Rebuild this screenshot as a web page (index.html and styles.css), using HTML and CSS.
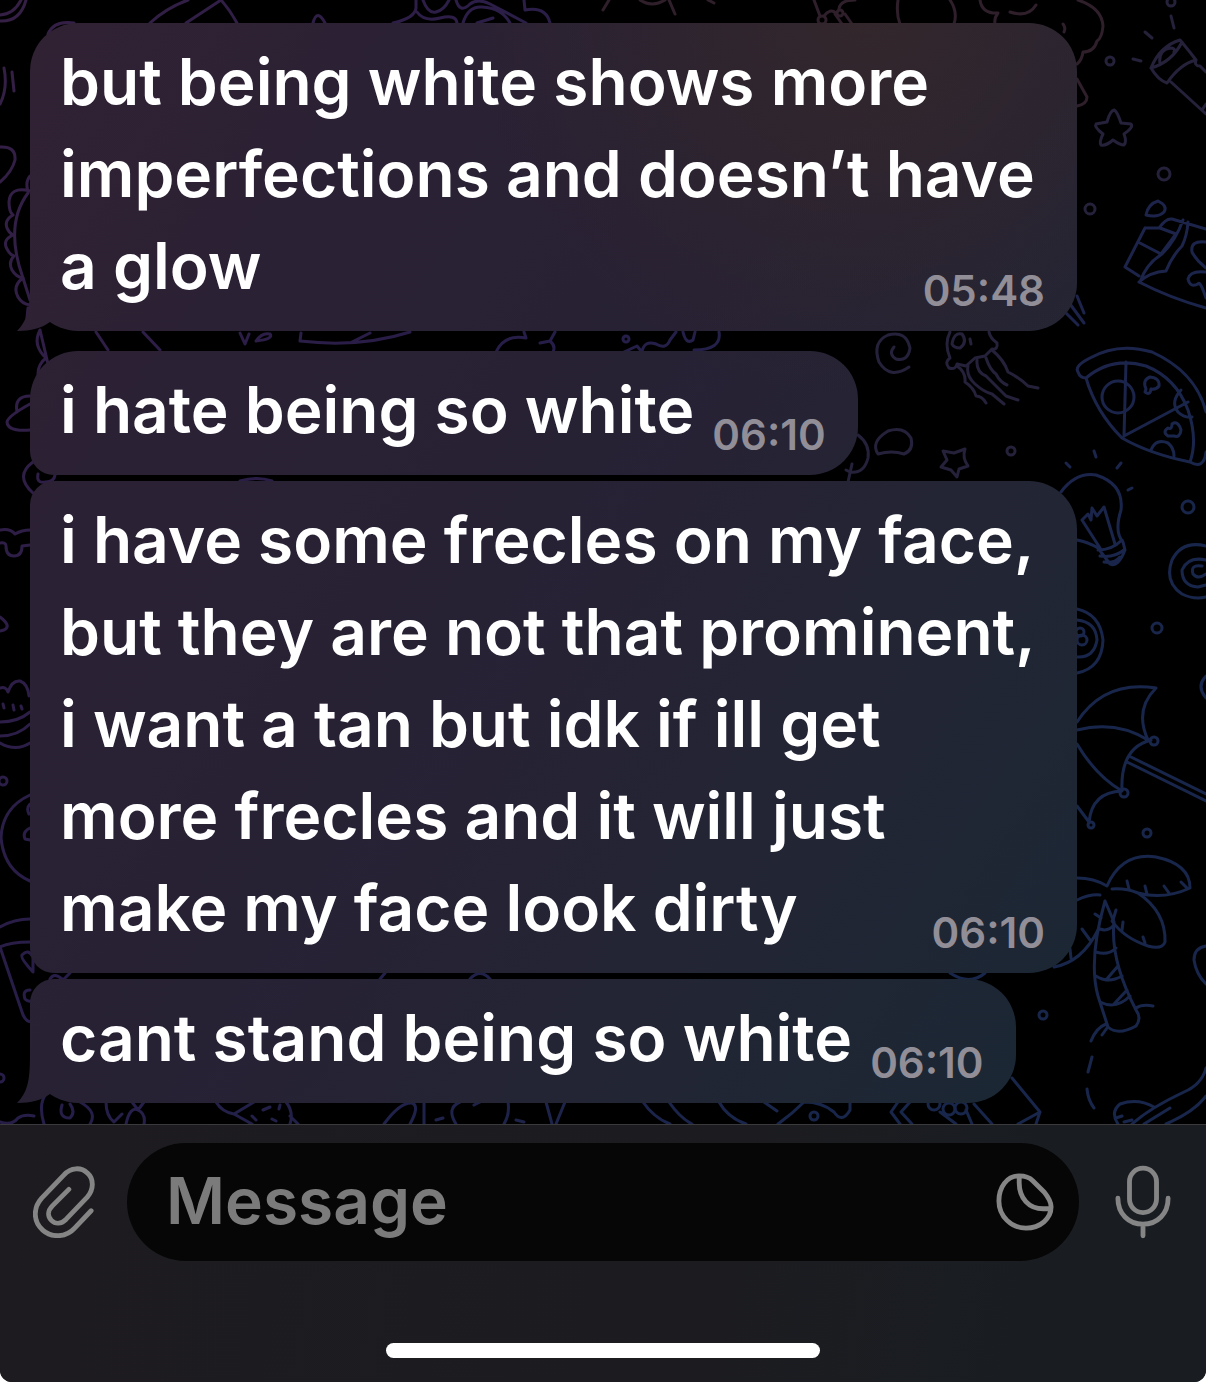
FILE: index.html
```html
<!DOCTYPE html>
<html lang="en">
<head>
  <meta charset="UTF-8" />
  <meta name="viewport" content="width=device-width, initial-scale=1" />
  <title>Chat</title>
  <link rel="stylesheet" href="styles.css">
</head>
<body>

  <div class="app">

    <main class="chat">
      <!-- doodle wallpaper -->
      <svg class="wallpaper" viewBox="0 0 1206 1124" preserveAspectRatio="xMidYMin slice" aria-hidden="true">
        <defs>
          <linearGradient id="ink" gradientUnits="userSpaceOnUse" x1="0" y1="0" x2="1100" y2="700">
            <stop offset="0" stop-color="#351f45" />
            <stop offset="0.45" stop-color="#271d48" />
            <stop offset="1" stop-color="#18264b" />
          </linearGradient>
        </defs>

        <!-- top edge -->
        <g class="warm">
          <path d="M898 0 Q896 14 900 24 M950 0 Q958 12 954 24" />
          <path d="M980 0 Q982 14 998 13 Q994 18 995 24 M1010 12 Q1028 18 1036 5" />
          <path d="M1078 0 Q1102 8 1103 26 Q1102 38 1097 41 Q1094 52 1083 52 Q1082 60 1077 64" />
          <path d="M1063 24 Q1066 28 1064 32" />
          <path d="M1077 79 L1087 97 Q1087 104 1077 106" />
          <path d="M603 10 L609 0 M640 0 Q652 8 665 0 M669 0 L675 14 M708 0 L714 3 M814 0 L820 16 M824 16 Q830 8 836 13 M839 9 Q840 0 855 0 M835 14 L842 24 M845 14 L852 24" />
          <circle cx="822" cy="20" r="4" />
          <circle cx="840" cy="13" r="3" />
        </g>
        <path d="M0 15 Q14 14 21 0 M0 21 Q20 22 26 0" />
        <path d="M48 34 Q54 20 74 23 M150 23 Q166 8 188 0 M186 23 L221 0 M221 0 Q230 10 237 23" />
        <path d="M313 23 Q317 8 325 23 M393 23 Q415 18 416 8 L416 0 M417 12 Q424 22 440 18 Q456 14 457 23 M423 0 Q428 14 436 12 Q444 10 449 0 M456 0 Q460 14 470 4 Q478 -2 490 4 L526 23 M463 23 Q468 6 482 7 Q502 8 510 23 M524 0 L525 10 Q546 6 550 23 M477 23 L493 18" />

        <!-- left edge -->
        <path d="M4 68 Q8 88 0 104 M12 72 L14 91" />
        <path d="M0 147 Q16 146 15 160 Q12 172 0 182" />
        <path d="M30 176 Q25 182 28 191 M30 191 Q10 186 9 202 Q9 212 13 215 Q4 220 7 228 Q9 233 13 235 Q2 240 7 249 Q10 255 14 256 Q8 262 12 270 Q16 277 23 278 Q12 286 18 297 Q22 304 30 305" />
        <path d="M28 193 Q4 225 23 278 L30 300" />
        <path d="M28 308 L27 318 M40 330 Q32 345 46 358 Q38 364 38 374 M40 330 L48 364" />
        <path d="M17 412 Q14 396 30 396 M30 404 Q8 416 7 422 Q8 432 30 430" />
        <path d="M33 462 Q14 476 33 493 M38 474 Q36 484 46 482 Q54 482 55 475" />
        <path d="M0 530 Q10 528 15 534 Q22 530 30 530 M0 543 Q6 542 6 546 Q6 556 14 556 Q22 556 22 546 L30 545" />
        <path d="M0 617 Q12 626 4 630 L0 631" />
        <path d="M0 688 Q6 686 8 692 Q12 680 20 681 Q28 684 29 696 M3 704 L4 708 M13 705 L14 710 M21 706 L22 709 M0 722 Q18 722 30 712 M0 736 Q18 736 30 724 M0 743 Q16 752 30 743" />
        <circle cx="3" cy="781" r="4" />
        <path d="M30 795 Q2 808 1 838 Q4 870 30 881 M30 804 Q26 808 29 814 M30 828 Q22 832 25 839 L30 840" />
        <path d="M0 927 Q14 919 30 919 M0 947 Q10 942 30 942 M0 947 L22 1012 Q25 1022 32 1022 M33 972 Q20 958 22 955 Q28 948 33 957 Z M30 990 Q22 990 25 999 Q28 1002 31 1001" />
        <circle cx="0" cy="1078" r="4" />

        <!-- strips between bubbles -->
        <path d="M96 332 L108 350 M143 332 L160 350 M240 333 L245 344 L249 334 M256 341 Q262 332 270 334 Q274 339 256 341 M301 333 L300 341 Q360 348 410 332 M352 342 L370 333" />
        <path d="M496 352 Q504 334 526 338 L524 332 M540 343 L550 341 Q556 346 553 352 M550 341 L555 332 M624 352 L637 346 L642 352 Q644 340 656 344 Q666 350 670 340 L676 332 M683 332 Q686 345 693 340 L695 332 M719 332 Q722 350 694 350" />
        <circle cx="626" cy="339" r="3" />
        <path d="M240 481 Q257 476 272 481 M50 979 Q54 972 62 979 M64 979 L70 973 M380 979 L385 973 M470 979 Q480 968 490 979 M950 973 Q970 986 985 973" />

        <!-- flashlight -->
        <path class="dusk" d="M1151 68 Q1160 46 1180 40 Q1190 52 1196 60 Q1180 64 1167 83 Q1158 80 1151 68 M1151 68 Q1172 62 1182 42 M1160 64 Q1158 50 1170 48 Q1176 48 1174 52 M1171 82 L1206 114 M1196 60 Q1194 66 1200 66 L1206 72 M1202 110 L1206 104" />
        <path class="dusk" d="M1145 32 L1152 38 M1133 59 L1141 61 M1171 16 L1174 28" />
        <g class="dusk">
          <circle cx="1171" cy="2" r="4" />
          <circle cx="1110" cy="61" r="4" />
          <circle cx="1164" cy="174" r="6" />
          <circle cx="1090" cy="209" r="5" />
          <path d="M1114 110 Q1117 111 1121 123 L1131 124 Q1134 127 1124 134 Q1127 142 1124 145 Q1120 145 1113 140 Q1106 146 1101 145 Q1099 142 1103 134 Q1094 127 1096 124 L1107 122 Q1110 111 1114 110 Z" />
        </g>

        <!-- chocolate bar -->
        <path d="M1145 228 L1159 228 Q1166 218 1172 219 L1206 229 M1145 228 L1125 267 L1139 276 M1140 282 Q1146 264 1162 254 Q1176 240 1183 220 M1139 282 Q1150 272 1166 271 Q1172 256 1182 246 Q1187 236 1188 222 M1138 242 L1161 254 L1176 234 L1160 228 M1139 282 Q1170 298 1206 308" />
        <path d="M1206 242 Q1190 240 1192 252 Q1196 260 1206 268 M1206 272 Q1190 270 1188 279 Q1190 288 1198 284 Q1200 280 1206 298" />
        <path d="M1146 215 Q1148 204 1158 201 Q1168 206 1164 212 Q1158 218 1146 215 Z" />
        <path d="M1077 296 L1084 313 M1070 304 L1084 323 M1064 311 L1078 325" />

        <!-- jellyfish and small bits -->
        <g class="dusk">
          <path d="M909 367 Q890 380 879 362 Q872 342 888 335 Q906 330 910 348 Q908 362 896 359 Q888 354 894 347" />
          <path d="M950 332 Q944 344 950 358 Q944 362 949 368 Q956 370 957 364 L966 366 L975 358 L985 356 L992 349 Q998 350 997 343 Q990 338 989 332 M952 344 Q954 332 962 334 Q968 342 960 348 Q954 348 952 344 M970 339 L971 344" />
          <path d="M957 366 Q966 372 965 382 Q974 388 976 396 Q982 396 986 403 M968 366 Q966 376 975 384 Q984 392 992 394 L1004 404 M977 360 Q976 372 986 376 Q998 388 1006 396 L1018 400 M986 358 Q990 370 996 374 Q1000 382 1007 385 M992 350 Q1004 360 1008 372 Q1020 378 1028 386 L1038 388" />
          <path d="M878 454 Q870 442 888 431 Q904 426 911 438 Q914 450 904 454 Q892 450 878 454 Z" />
          <path d="M858 435 Q870 444 868 458 Q864 474 850 472 L846 470 M852 464 L848 482" />
          <path d="M954 453 L965 449 Q962 458 968 466 L959 469 L957 477 L951 470 L941 467 L947 460 L943 451 Z" />
          <circle cx="1011" cy="451" r="4" />
        </g>

        <!-- pizza -->
        <path d="M1078 372 Q1074 366 1090 358 Q1118 342 1152 352 Q1196 372 1206 412 M1078 372 Q1080 378 1086 378 Q1112 356 1146 366 Q1176 378 1188 410 Q1198 440 1190 462 M1086 378 Q1096 412 1122 438 Q1150 454 1190 462 Q1204 470 1206 452 M1126 362 L1124 436 L1188 402" />
        <circle cx="1118" cy="397" r="16" />
        <path d="M1181 390 Q1170 402 1178 412 Q1184 418 1192 417 M1151 450 Q1156 438 1168 443 Q1174 448 1174 456" />
        <path d="M1146 389 Q1142 380 1150 377 Q1160 378 1159 386 Q1156 390 1151 389 Q1150 396 1145 392 Z M1172 424 Q1178 420 1181 430 Q1180 438 1174 436 L1168 436 Q1162 432 1168 428 Q1172 430 1172 424 Z" />

        <!-- light bulb -->
        <path d="M1061 492 Q1076 472 1096 475 Q1124 484 1121 510 Q1114 532 1123 542 L1125 550 Q1118 568 1110 564 L1098 548 Q1088 542 1077 540 M1098 550 Q1112 550 1122 540 M1100 556 Q1114 558 1124 550 M1104 562 Q1114 564 1120 557 M1100 548 L1082 520 L1088 514 L1091 520 L1092 508 L1097 516 L1104 507 L1115 544" />
        <path d="M1066 463 L1070 467 M1094 451 L1096 457 M1121 463 L1117 468 M1132 488 L1128 490" />
        <circle cx="1188" cy="507" r="6" />

        <!-- snail shell, coin -->
        <path d="M1206 546 Q1182 540 1172 560 Q1164 582 1182 594 Q1194 600 1206 597 M1206 560 Q1188 556 1182 570 Q1182 586 1198 587 L1206 585 M1202 566 Q1190 564 1193 574 Q1198 580 1206 574" />
        <path d="M1077 609 Q1100 614 1103 640 Q1102 668 1077 673 M1077 620 Q1096 622 1097 640 Q1094 658 1077 657" />
        <circle cx="1080" cy="632" r="4" />
        <circle cx="1082" cy="640" r="5" />
        <circle cx="1157" cy="628" r="5" />
        <path d="M1206 676 Q1196 686 1206 698" />

        <!-- umbrella -->
        <path d="M1077 722 Q1104 680 1156 688 Q1134 710 1148 740 Q1116 720 1077 730 M1077 744 Q1096 776 1122 791 Q1120 748 1151 740 M1077 806 L1089 822 Q1092 792 1122 791 M1131 757 L1206 794 M1127 762 L1206 801" />
        <circle cx="1154" cy="741" r="4" />
        <circle cx="1124" cy="793" r="4" />
        <circle cx="1091" cy="825" r="3" />
        <circle cx="1147" cy="833" r="4" />

        <!-- palm tree -->
        <path d="M1077 878 Q1094 878 1107 886 Q1122 852 1156 857 Q1190 864 1190 888 Q1164 900 1138 893 Q1126 888 1112 889 M1138 893 Q1166 912 1165 942 Q1162 950 1148 946 Q1124 938 1112 921 M1077 900 Q1090 894 1100 895 M1054 967 Q1082 962 1098 930" />
        <path d="M1127 881 L1129 889 M1145 886 L1147 894 M1164 886 L1169 893 M1181 882 L1187 888 M1095 914 L1101 918 M1082 929 L1090 940 M1070 949 L1071 958 M1116 910 L1113 920 M1123 922 L1122 930 M1143 937 L1145 943" />
        <path d="M1105 901 Q1088 960 1098 996 L1108 1027 Q1118 1036 1136 1026 Q1142 1018 1136 1010 Q1110 960 1114 922 L1105 901 M1100 929 Q1108 932 1114 925 M1096 952 Q1108 956 1116 948 M1096 976 Q1108 984 1122 976 M1100 1002 Q1116 1010 1130 996 M1106 980 L1118 966 M1114 1004 L1127 990" />
        <path d="M1136 1008 Q1142 1004 1153 1006 M1106 1024 Q1096 1028 1091 1041 M1107 1028 L1102 1035 M1092 1057 L1088 1072 M1087 1089 Q1088 1100 1094 1108" />
        <circle cx="1043" cy="1015" r="4" />
        <path d="M1206 946 Q1194 948 1194 960 Q1196 974 1206 984" />

        <!-- bottom strip -->
        <path d="M0 1122 Q12 1126 18 1118 Q24 1114 34 1116 M44 1124 Q38 1104 46 1094 M80 1102 Q98 1112 90 1124 M62 1105 Q58 1118 70 1118 Q76 1112 70 1104 M106 1102 Q106 1116 114 1122 L122 1114 M126 1124 Q130 1106 138 1110 Q146 1114 144 1124 M132 1102 L138 1110 L144 1102" />
        <path d="M216 1102 Q222 1112 234 1114 L254 1102 M234 1114 L252 1124 M286 1102 Q294 1112 290 1124 M290 1116 L298 1124 M270 1107 L263 1110 M280 1105 L279 1109 M252 1116 L256 1120 M272 1119 L276 1121" />
        <path d="M384 1124 Q400 1102 412 1103 Q420 1106 410 1124 M424 1102 L424 1124 M456 1124 Q446 1108 460 1102 M474 1105 L480 1102 M508 1102 Q510 1114 504 1124 M436 1120 L443 1118 M516 1120 L524 1122 M546 1102 L552 1124 M565 1102 L556 1124" />
        <path d="M643 1102 Q654 1118 670 1124 M669 1102 Q680 1118 692 1124 M719 1102 Q728 1118 746 1124 M764 1102 L777 1111 M778 1124 Q792 1114 804 1102 Q822 1102 834 1112 Q842 1124 850 1110 L850 1102" />
        <circle cx="814" cy="1116" r="4" />
        <path d="M898 1102 L891 1112 L900 1124 M910 1102 L901 1112 L912 1124 M1012 1078 L1040 1112 L1036 1124 M1040 1112 L1018 1124 M974 1104 L992 1124 M940 1112 L956 1124 M966 1110 L972 1124" />
        <circle cx="934" cy="1104" r="6" />
        <circle cx="949" cy="1109" r="6" />
        <circle cx="961" cy="1108" r="6" />
        <path d="M1206 1068 Q1202 1084 1184 1092 Q1150 1108 1132 1124 M1118 1124 Q1110 1112 1120 1104 Q1138 1098 1154 1107 M1170 1108 L1144 1124 M1206 1096 Q1194 1112 1166 1124 M1116 1118 L1122 1116 M1124 1122 L1132 1120" />
      </svg>

      <div class="bubble first last spaced">
        but being white shows more imperfections and doesn’t have a glow
        <time datetime="05:48">05:48</time>
      </div>
      <div class="bubble first">
        i hate being so white
        <time datetime="06:10">06:10</time>
      </div>
      <div class="bubble">
        i have some frecles on my face, but they are not that prominent, i want a tan but idk if ill get more frecles and it will just make my face look dirty
        <time datetime="06:10">06:10</time>
      </div>
      <div class="bubble last">
        cant stand being so white
        <time datetime="06:10">06:10</time>
      </div>
    </main>

    <footer class="panel">
      <form class="composer">
        <button type="button" class="icon-button" aria-label="Attach">
          <svg width="62" height="72" viewBox="0 0 64 74">
            <path d="M60 46 L43 64 C34 74 19 74 10 66 C0 57 0 43 9 33 L32 9 C39 1 50 1 56 7 C63 13 63 24 56 32 L34 55 C29 60 23 60 19 56 C15 52 15 46 20 41 L37 24" />
          </svg>
        </button>
        <div class="field">
          <input type="text" class="message-input" placeholder="Message" aria-label="Message">
          <button type="button" class="icon-button" aria-label="Stickers">
            <svg width="58" height="58" viewBox="0 0 60 60">
              <path d="M24 3 C11 3 3 15 3 29 C3 45 16 57 31 57 C46 57 57 47 57 35 C57 30 54 25 50 20 L38 8 C34 4 29 3 24 3 Z M24 4 V10 C24 26 34 37 49 37 H56" />
            </svg>
          </button>
        </div>
        <button type="button" class="icon-button" aria-label="Record voice message">
          <svg width="56" height="76" viewBox="0 0 58 76">
            <rect x="15" y="3" width="28" height="46" rx="14" />
            <path d="M3 34 C3 50 14 61 29 61 C44 61 55 50 55 34 M29 61 V73" />
          </svg>
        </button>
      </form>
      <div class="home-indicator"></div>
    </footer>

  </div>

</body>
</html>
```

FILE: styles.css
```css
* {
  box-sizing: border-box;
}

body {
  margin: 0;
  background: #fff;
  font-family: Inter, "Liberation Sans", sans-serif;
  font-weight: 600;
  color: #fff;
}

.app {
  display: flex;
  flex-direction: column;
  min-height: 100vh;
  background: #000;
  border-radius: 0 0 12px 12px;
  overflow: hidden;
}

/* conversation */
.chat {
  position: relative;
  flex: 1;
  display: flex;
  flex-direction: column;
  align-items: flex-start;
  gap: 6px;
  padding: 23px 30px 21px;
}

.wallpaper {
  position: absolute;
  inset: 0;
  width: 100%;
  height: 100%;
  fill: none;
  stroke: url(#ink);
  stroke-width: 3;
  stroke-linecap: round;
  stroke-linejoin: round;
}

.wallpaper .warm {
  stroke: #2f1f2a;
}

.wallpaper .dusk {
  stroke: #25213a;
}

.bubble,
.bubble.last::before {
  background-image:
    radial-gradient(circle at 72% 0, #33272b, rgba(51, 39, 43, 0) 400px),
    linear-gradient(125deg, #312233 0%, #2b2134 20%, #272134 42%, #232534 62%, #1b2734 82%);
  background-attachment: fixed;
}

.bubble {
  position: relative;
  max-width: calc(100% - 99px);
  padding: 13px 32px 7px 30px;
  border-radius: 24px 48px 48px 24px;
  font-size: 64px;
  line-height: 92px;
}

.bubble.first {
  border-top-left-radius: 48px;
}

.bubble.last {
  border-bottom-left-radius: 48px;
}

.bubble.spaced {
  margin-bottom: 14px;
}

/* tail */
.bubble.last::before {
  content: "";
  position: absolute;
  left: -13px;
  bottom: 0;
  width: 34px;
  height: 50px;
  clip-path: path("M13 0 C13 24 12 38 0 50 C14 50 25 47 33 41 L33 0 Z");
}

.bubble time {
  float: right;
  margin: 38px 0 0 18px;
  font-size: 42px;
  line-height: 66px;
  color: #918e97;
}

/* input panel */
.panel {
  padding: 18px 0 24px;
  border-top: 1px solid #3a3a3d;
  background: linear-gradient(100deg, #1d1b1f, #1c1c20 60%, #191d22 85%);
}

.composer {
  display: grid;
  grid-template-columns: 127px minmax(0, 1fr) 127px;
  align-items: center;
}

.icon-button {
  display: flex;
  justify-content: center;
  padding: 0;
  border: 0;
  background: none;
  cursor: pointer;
}

.icon-button svg {
  fill: none;
  stroke: #858585;
  stroke-width: 5;
  stroke-linecap: round;
  stroke-linejoin: round;
}

.field {
  display: flex;
  align-items: center;
  height: 118px;
  padding: 0 25px 4px 39px;
  border-radius: 59px;
  background: #060606;
}

.field .icon-button {
  padding-top: 4px;
}

.message-input {
  flex: 1;
  min-width: 0;
  padding: 0;
  border: 0;
  outline: 0;
  background: none;
  color: #fff;
  font: inherit;
  font-size: 64px;
}

.message-input::placeholder {
  color: #7b7b7b;
  opacity: 1;
}

.home-indicator {
  width: 36%;
  height: 15px;
  margin: 82px auto 0;
  border-radius: 8px;
  background: #fff;
}
```
